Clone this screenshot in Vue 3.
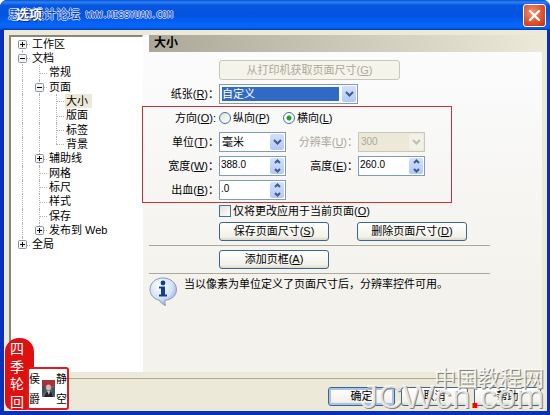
<script setup>
import { ref } from 'vue'

// lines: one entry per indent column
//   'pass' vertical guide, 'tee' vertical + stub, 'first' lower half + stub,
//   'last' upper half + stub
const tree = [
  { text: '工作区', lines: ['first'], box: '+' },
  { text: '文档', lines: ['tee'], box: '-' },
  { text: '常规', lines: ['pass', 'tee'] },
  { text: '页面', lines: ['pass', 'tee'], box: '-' },
  { text: '大小', lines: ['pass', 'pass', 'tee'] },
  { text: '版面', lines: ['pass', 'pass', 'tee'] },
  { text: '标签', lines: ['pass', 'pass', 'tee'] },
  { text: '背景', lines: ['pass', 'pass', 'last'] },
  { text: '辅助线', lines: ['pass', 'tee'], box: '+' },
  { text: '网格', lines: ['pass', 'tee'] },
  { text: '标尺', lines: ['pass', 'tee'] },
  { text: '样式', lines: ['pass', 'tee'] },
  { text: '保存', lines: ['pass', 'tee'] },
  { text: '发布到 Web', lines: ['pass', 'last'], box: '+' },
  { text: '全局', lines: ['last'], box: '+' },
]

const selected = ref('大小')
const paper = ref('自定义')
const orientation = ref('landscape')
const unit = ref('毫米')
const resolution = ref('300')
const width = ref('388.0')
const height = ref('260.0')
const bleed = ref('.0')
const currentOnly = ref(false)
</script>

<template>
  <div class="dialog">
    <header class="titlebar">
      <div class="title">
        <span class="caption">选项</span>
        <span class="forum">思缘设计论坛</span>
        <span class="site">WWW.MISSYUAN.COM</span>
      </div>
      <button class="close" type="button" aria-label="关闭">
        <svg viewBox="0 0 21 21" width="21" height="21">
          <path d="M6 6l9 9M15 6l-9 9" stroke="#fff" stroke-width="2.4" stroke-linecap="round" />
        </svg>
      </button>
    </header>

    <div class="client">
      <div class="columns">
        <ul class="tree">
          <li v-for="node in tree" :key="node.text" class="node">
            <span
              v-for="(line, i) in node.lines"
              :key="i"
              class="guide"
              :class="`guide--${line}`"
            >
              <svg
                v-if="node.box && i === node.lines.length - 1"
                class="expander"
                viewBox="0 0 9 9"
                width="9"
                height="9"
              >
                <rect x=".5" y=".5" width="8" height="8" rx="1" fill="#f4f3ee" stroke="#8795a8" />
                <path d="M2 4.5h5" stroke="#000" />
                <path v-if="node.box === '+'" d="M4.5 2v5" stroke="#000" />
              </svg>
            </span>
            <span
              class="node-text"
              :class="{ 'node-text--selected': node.text === selected }"
            >{{ node.text }}</span>
          </li>
        </ul>

        <main class="panel">
          <h1 class="heading">大小</h1>

          <div class="form">
            <button class="btn btn--printer" type="button" disabled>
              从打印机获取页面尺寸(<u>G</u>)
            </button>

            <div class="row row--paper">
              <label class="label" for="paper">纸张(<u>R</u>)：</label>
              <div class="combo combo--wide combo--focus">
                <select id="paper" v-model="paper">
                  <option>自定义</option>
                </select>
                <span class="arrow">
                  <svg viewBox="0 0 9 6" width="9" height="6"><path d="M1 1l3.500 3.500L8 1" /></svg>
                </span>
              </div>
            </div>

            <section class="group">
              <div class="row row--radio">
                <span class="label label--tight">方向(<u>O</u>):</span>
                <label class="choice">
                  <input v-model="orientation" type="radio" value="portrait" />
                  <span>纵向(<u>P</u>)</span>
                </label>
                <label class="choice">
                  <input v-model="orientation" type="radio" value="landscape" />
                  <span>横向(<u>L</u>)</span>
                </label>
              </div>

              <div class="row">
                <label class="label" for="unit">单位(<u>T</u>)：</label>
                <div class="combo">
                  <select id="unit" v-model="unit">
                    <option>毫米</option>
                  </select>
                  <span class="arrow">
                    <svg viewBox="0 0 9 6" width="9" height="6"><path d="M1 1l3.500 3.500L8 1" /></svg>
                  </span>
                </div>
                <label class="label label--off" for="resolution">分辨率(<u>U</u>)：</label>
                <div class="combo combo--off">
                  <select id="resolution" v-model="resolution" disabled>
                    <option>300</option>
                  </select>
                  <span class="arrow">
                    <svg viewBox="0 0 9 6" width="9" height="6"><path d="M1 1l3.500 3.500L8 1" /></svg>
                  </span>
                </div>
              </div>

              <div class="row">
                <label class="label" for="width">宽度(<u>W</u>)：</label>
                <div class="spin">
                  <input id="width" v-model="width" type="text" />
                  <span class="arrow">
                    <svg viewBox="0 0 7 14" width="7" height="14"><path d="M1 4l2.500-2.500L6 4M1 10l2.500 2.500L6 10" /></svg>
                  </span>
                </div>
                <label class="label" for="height">高度(<u>E</u>)：</label>
                <div class="spin">
                  <input id="height" v-model="height" type="text" />
                  <span class="arrow">
                    <svg viewBox="0 0 7 14" width="7" height="14"><path d="M1 4l2.500-2.500L6 4M1 10l2.500 2.500L6 10" /></svg>
                  </span>
                </div>
              </div>

              <div class="row">
                <label class="label" for="bleed">出血(<u>B</u>)：</label>
                <div class="spin">
                  <input id="bleed" v-model="bleed" type="text" />
                  <span class="arrow">
                    <svg viewBox="0 0 7 14" width="7" height="14"><path d="M1 4l2.500-2.500L6 4M1 10l2.500 2.500L6 10" /></svg>
                  </span>
                </div>
              </div>
            </section>

            <label class="choice choice--check">
              <input v-model="currentOnly" type="checkbox" />
              <span>仅将更改应用于当前页面(<u>O</u>)</span>
            </label>

            <div class="actions actions--sizes">
              <button class="btn" type="button">保存页面尺寸(<u>S</u>)</button>
              <button class="btn" type="button">删除页面尺寸(<u>D</u>)</button>
            </div>
            <div class="actions">
              <button class="btn" type="button">添加页框(<u>A</u>)</button>
            </div>

            <div class="info">
              <svg viewBox="0 0 30 30" width="30" height="30">
                <defs>
                  <radialGradient id="bubble" cx=".4" cy=".3" r=".75">
                    <stop offset="0" stop-color="#fff" />
                    <stop offset=".6" stop-color="#d3e2f6" />
                    <stop offset="1" stop-color="#7da3d8" />
                  </radialGradient>
                </defs>
                <path
                  d="M14 1C6.500 1 1 6 1 12.500c0 5.500 4 9.500 9.500 10.800.8 2 3 4 6 5.200-.8-2-.8-3.800-.3-5.200C23 22.500 27.500 18.500 27.500 12.500 27.500 6 21.500 1 14 1z"
                  fill="url(#bubble)"
                  stroke="#8799b8"
                />
                <circle cx="14" cy="6" r="2.400" fill="#10408f" />
                <path d="M10 9.500h6v8h2v2h-8v-2h2v-6h-2z" fill="#10408f" />
              </svg>
              <p>当以像素为单位定义了页面尺寸后，分辨率控件可用。</p>
            </div>
          </div>
        </main>
      </div>

      <footer class="footer">
        <button class="btn btn--default" type="button">确定</button>
        <button class="btn" type="button">取消</button>
        <button class="btn" type="button">帮助</button>
      </footer>
    </div>

    <div class="seal">
      <div class="seal-red">
        <span>四</span><span>季</span><span>轮</span><span>回</span>
      </div>
      <div class="seal-white">
        <div class="seal-col"><span>侯</span><span>爵</span></div>
        <svg viewBox="0 0 13 17" width="13" height="17">
          <rect width="13" height="17" fill="#5d6470" />
          <rect width="13" height="6" fill="#a8323a" />
          <path d="M0 6h3l1 5-4 4zM13 7l-3 1v6l3 2z" fill="#3c5560" />
          <ellipse cx="6.500" cy="7.500" rx="2.500" ry="3" fill="#d9b3ad" />
          <path d="M2 17l3-6 2 2 2-2 2 6z" fill="#20222c" />
          <path d="M5 11l2 4 1-4z" fill="#d5c8c8" />
        </svg>
        <div class="seal-col"><span>静</span><span>空</span></div>
      </div>
    </div>

    <div class="mark">
      <span class="mark-name">中国教程网</span>
      <span class="mark-site">JCWcn<i>.</i>com</span>
    </div>
  </div>
</template>

<style>
body {
  margin: 0;
  background: #fff;
}
</style>

<style scoped>
.dialog {
  position: relative;
  box-sizing: border-box;
  min-height: 100vh;
  display: flex;
  flex-direction: column;
  padding: 0 3px 4px 4px;
  background: #0831b9;
  border-radius: 7px 7px 0 0;
  font-family: 'Liberation Sans', 'Noto Sans CJK SC', sans-serif;
  font-size: 11px;
  line-height: 14px;
  color: #000;
}

.dialog * {
  box-sizing: border-box;
}

button,
input,
select {
  margin: 0;
  font: inherit;
  color: inherit;
}

/* title bar */
.titlebar {
  height: 30px;
  flex: none;
  margin: 0 -3px 0 -4px;
  padding: 0 4px 0 8px;
  display: flex;
  align-items: center;
  justify-content: space-between;
  border-radius: 7px 7px 0 0;
  background: linear-gradient(#0a4fd0, #2d83f5 7%, #0657e0 18%, #0452e0 50%, #0666fb 82%, #0560f0 93%, #0338b0);
}

.title {
  position: relative;
  display: flex;
  align-items: center;
  gap: 6px;
  color: #0a3fb4;
  text-shadow: 1px 0 #c4d9ff, -1px 0 #c4d9ff, 0 1px #c4d9ff, 0 -1px #c4d9ff;
}

.caption {
  position: absolute;
  left: 8px;
  font-size: 13px;
  font-weight: bold;
  color: #fff;
  text-shadow: 1px 1px #0f2f80;
}

.forum {
  font-size: 12px;
}

.site {
  font-family: 'DejaVu Sans Mono', monospace;
  font-size: 9px;
}

.close {
  width: 23px;
  height: 23px;
  padding: 0;
  display: grid;
  place-items: center;
  border: 1px solid #fff;
  border-radius: 3px;
  background: radial-gradient(circle at 40% 35%, #f09474, #dc4f28 60%, #b93213);
}

/* client area */
.client {
  flex: 1;
  display: flex;
  flex-direction: column;
  padding: 5px 5px 0;
  background: #ece9d8;
}

.columns {
  flex: 1;
  display: flex;
}

.tree {
  flex: none;
  width: 134px;
  margin: 0;
  padding: 0 0 0 3px;
  list-style: none;
  background: #fff;
  border: 1px solid #fff;
  border-top: 2px solid #8a8778;
  border-left: 2px solid #8a8778;
  display: grid;
  align-content: start;
  grid-template-rows: repeat(5, 14px 14px 15px);
}

.node {
  display: flex;
  align-items: stretch;
}

.guide {
  position: relative;
  width: 17px;
  flex: none;
  display: flex;
  align-items: center;
  padding-left: 4px;
}

.guide::before {
  content: '';
  position: absolute;
  left: 8px;
  top: 0;
  bottom: 0;
  border-left: 1px dotted #b5b2a5;
}

.guide--first::before {
  top: 50%;
}

.guide--last::before {
  bottom: 50%;
}

.guide:not(.guide--pass)::after {
  content: '';
  position: absolute;
  left: 8px;
  right: 1px;
  top: 50%;
  border-top: 1px dotted #b5b2a5;
}

.expander {
  position: relative;
  z-index: 1;
}

.node-text {
  padding: 0 1px;
  line-height: 14px;
  white-space: nowrap;
}

.node-text--selected {
  padding-right: 4px;
  background: #ece9d8;
}

/* right panel */
.panel {
  flex: 1;
  min-width: 0;
  display: flex;
  flex-direction: column;
  background: linear-gradient(#fcfcfe, #f3f2ec 75%);
}

.heading {
  margin: 0 0 0 6px;
  padding-left: 5px;
  font-size: 12px;
  line-height: 17px;
  background: linear-gradient(90deg, #aca899, #ece9d8);
}

.form {
  padding: 8px 12px 0 6px;
}

.row {
  display: grid;
  grid-template-columns: 70px 67px 72px 67px;
  align-items: center;
  min-height: 20px;
}

.row--paper {
  grid-template-columns: 70px 139px;
  margin-top: 4px;
}

.row--radio {
  grid-template-columns: 70px 64px 100px;
}

.label {
  text-align: right;
  white-space: nowrap;
}

.label--tight {
  padding-right: 3px;
}

.label--off {
  color: #aca899;
}

/* red frame round the size settings */
.group {
  max-width: 310px;
  margin: 2px 0 0 -7px;
  padding: 1px 6px 2px;
  border: 1px solid #c8303c;
  display: grid;
  gap: 4px;
}

.combo,
.spin {
  position: relative;
  height: 20px;
}

.combo select,
.spin input {
  display: block;
  width: 100%;
  height: 100%;
  border: 1px solid #7f9db9;
  border-radius: 0;
  background: #fff;
  appearance: none;
  outline: none;
}

.combo select {
  padding: 1px 18px 1px 2px;
}

.spin input {
  padding: 0 18px 3px 1px;
  font-size: 10px;
}

.combo--focus select {
  padding: 2px 18px 2px 2px;
  color: #fff;
  background: #316ac5 content-box;
}

.combo--off select {
  color: #aca899;
  opacity: 1;
  background: #ece9d8;
  border-color: #c9c7ba;
  font-size: 10px;
}

.arrow {
  position: absolute;
  top: 2px;
  right: 2px;
  bottom: 2px;
  width: 14px;
  display: grid;
  place-items: center;
  border-radius: 2px;
  background: linear-gradient(#d3e0fd, #b4c8f6);
  pointer-events: none;
}

.arrow path {
  fill: none;
  stroke: #3f5b8c;
  stroke-width: 2;
}

.combo--off .arrow {
  background: #f2f1e8;
}

.combo--off .arrow path {
  stroke: #c0beb0;
}

.choice {
  display: flex;
  align-items: center;
  gap: 2px;
  white-space: nowrap;
}

.choice input {
  appearance: none;
  width: 12px;
  height: 12px;
  flex: none;
  border: 1px solid #41719c;
  background: linear-gradient(135deg, #e0e0dc, #fff);
}

.choice input[type='radio'] {
  border-radius: 50%;
}

.choice input[type='radio']:checked {
  background: radial-gradient(circle, #21a121 2px, #fff 3px);
}

.choice--check {
  height: 14px;
  margin: 1px 0 0 70px;
}

.btn {
  height: 19px;
  padding: 0;
  line-height: 15px;
  white-space: nowrap;
  border: 1px solid #3c6589;
  border-radius: 3px;
  background: linear-gradient(#fff, #f2f1ea 80%, #dcd8cc);
}

.btn--printer {
  display: block;
  width: 181px;
  margin-left: 70px;
  height: 20px;
  color: #aca899;
  border-color: #c9c7ba;
  background: #f5f4ea;
}

.btn--default {
  box-shadow: inset 0 0 0 2px #a9c3ee;
}

.actions {
  display: flex;
  gap: 28px;
  margin-right: 40px;
  padding: 4px 0 4px 70px;
  border-bottom: 1px solid #aca899;
}

.actions .btn {
  width: 110px;
}

.info {
  display: flex;
  gap: 5px;
  padding-top: 3px;
}

.info svg {
  flex: none;
}

.info p {
  margin: 0;
}

.footer {
  display: flex;
  justify-content: flex-end;
  gap: 6px;
  margin-top: 6px;
  padding: 8px 1px 5px 0;
  border-top: 1px solid #aca899;
}

.footer .btn {
  width: 67px;
}

/* seal in the lower left corner */
.seal {
  position: absolute;
  left: 5px;
  bottom: 5px;
  display: flex;
  align-items: flex-end;
}

.seal-red {
  width: 29px;
  height: 72px;
  padding: 1px 5px 0 0;
  display: flex;
  flex-direction: column;
  align-items: center;
  justify-content: space-evenly;
  border-radius: 14px 14px 8px 8px;
  background: #e01010;
  color: #fff;
  font-family: 'Noto Sans CJK TC', sans-serif;
  font-size: 14px;
  line-height: 16px;
}

.seal-white {
  width: 42px;
  height: 43px;
  margin-left: -7px;
  display: flex;
  align-items: center;
  justify-content: space-between;
  border: 2px solid #dc1c1c;
  border-radius: 3px;
  background: #fff;
}

.seal-col {
  display: grid;
  gap: 6px;
  font-size: 11px;
}

/* site mark over the footer */
.mark {
  position: absolute;
  right: 6px;
  bottom: 0;
  display: flex;
  flex-direction: column;
  align-items: flex-end;
  color: rgba(255, 255, 255, 0.8);
  text-shadow: 1px 1px #85837a;
  pointer-events: none;
}

.mark-name {
  margin-bottom: -18px;
  font-size: 22px;
  line-height: 32px;
}

.mark-site {
  font-size: 34px;
  line-height: 38px;
}

.mark-site i {
  font-style: normal;
  font-weight: bold;
  color: #f00;
  text-shadow: none;
}
</style>
